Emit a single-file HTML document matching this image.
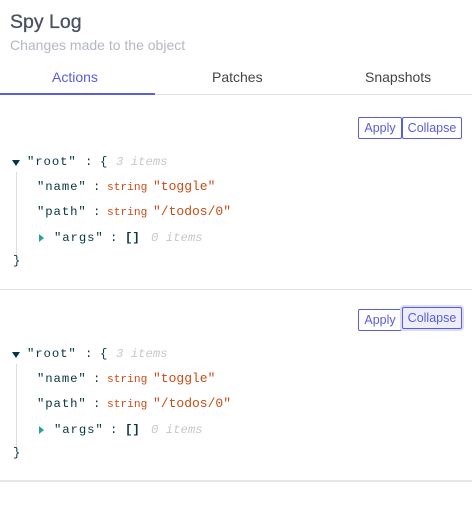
<!DOCTYPE html><html><head><style>
body{margin:0;width:472px;height:529px;background:#fff;font-family:"Liberation Sans",sans-serif;position:relative;overflow:hidden}
.a{position:absolute;white-space:pre}
.m{font-family:"Liberation Mono",monospace;font-size:12.3px;color:#073642}
.k{letter-spacing:0.9px}
.s{color:#cb4b16;font-size:13px}
.t{font-size:11.2px;color:#cb4b16}
.i{color:#c8c8c8;font-style:italic}
.btn{position:absolute;height:20px;border:1px solid #5a5de0;border-radius:2px;color:#5a5de0;font-size:12.5px;line-height:20px;text-align:center;box-sizing:content-box}
.vl{position:absolute;left:16px;width:1px;background:#ddd}
.tri{position:absolute;width:0;height:0}
</style></head><body>
<div class="a" style="left:10px;top:11px;font-size:19.5px;color:#4a5064;-webkit-text-stroke:0.3px #4a5064">Spy Log</div>
<div class="a" style="left:10px;top:37px;font-size:14px;color:#b4b8c5">Changes made to the object</div>
<div class="a" style="left:52px;top:69px;font-size:14px;color:#5a5de0">Actions</div>
<div class="a" style="left:212px;top:69px;font-size:14px;color:#444">Patches</div>
<div class="a" style="left:365px;top:69px;font-size:14px;color:#444">Snapshots</div>
<div style="position:absolute;left:0;top:94px;width:472px;height:1px;background:#e2e2e2"></div>
<div style="position:absolute;left:0;top:93px;width:155px;height:2px;background:#5a5de0"></div>

<div class="btn" style="left:358px;top:117px;width:42px">Apply</div>
<div class="btn" style="left:402px;top:117px;width:58px">Collapse</div>
<div class="tri" style="left:12px;top:160px;border-left:4px solid transparent;border-right:4px solid transparent;border-top:6px solid #073642"></div>
<div class="a m k" style="left:27px;top:155px">"root"</div><div class="a m" style="left:85px;top:155px">:</div><div class="a m" style="left:100px;top:155px">{</div><div class="a m i" style="left:116px;top:155px">3 items</div>
<div class="vl" style="top:172px;height:84px"></div>
<div class="a m k" style="left:37px;top:180px">"name"</div><div class="a m" style="left:93px;top:180px">:</div><div class="a t" style="left:107px;top:182px;font-family:'Liberation Mono',monospace">string</div><div class="a m s" style="left:153px;top:179px">"toggle"</div>
<div class="a m k" style="left:37px;top:205px">"path"</div><div class="a m" style="left:93px;top:205px">:</div><div class="a t" style="left:107px;top:207px;font-family:'Liberation Mono',monospace">string</div><div class="a m s" style="left:153px;top:204px">"/todos/0"</div>
<div class="tri" style="left:39px;top:234px;border-top:4px solid transparent;border-bottom:4px solid transparent;border-left:5px solid #2aa198"></div>
<div class="a m k" style="left:54px;top:231px">"args"</div><div class="a m" style="left:110px;top:231px">:</div><div class="a m" style="left:125px;top:231px;font-weight:bold">[]</div><div class="a m i" style="left:151px;top:231px">0 items</div>
<div class="a m" style="left:13px;top:254px">}</div>
<div style="position:absolute;left:0;top:289px;width:472px;height:1px;background:#e2e2e2"></div>

<div class="btn" style="left:358px;top:309px;width:42px">Apply</div>
<div class="btn" style="left:402px;top:307px;width:58px;background:#eeeefb;box-shadow:0 0 0 2px #dcdcf5">Collapse</div>
<div class="tri" style="left:12px;top:352px;border-left:4px solid transparent;border-right:4px solid transparent;border-top:6px solid #073642"></div>
<div class="a m k" style="left:27px;top:347px">"root"</div><div class="a m" style="left:85px;top:347px">:</div><div class="a m" style="left:100px;top:347px">{</div><div class="a m i" style="left:116px;top:347px">3 items</div>
<div class="vl" style="top:364px;height:84px"></div>
<div class="a m k" style="left:37px;top:372px">"name"</div><div class="a m" style="left:93px;top:372px">:</div><div class="a t" style="left:107px;top:374px;font-family:'Liberation Mono',monospace">string</div><div class="a m s" style="left:153px;top:371px">"toggle"</div>
<div class="a m k" style="left:37px;top:397px">"path"</div><div class="a m" style="left:93px;top:397px">:</div><div class="a t" style="left:107px;top:399px;font-family:'Liberation Mono',monospace">string</div><div class="a m s" style="left:153px;top:396px">"/todos/0"</div>
<div class="tri" style="left:39px;top:426px;border-top:4px solid transparent;border-bottom:4px solid transparent;border-left:5px solid #2aa198"></div>
<div class="a m k" style="left:54px;top:423px">"args"</div><div class="a m" style="left:110px;top:423px">:</div><div class="a m" style="left:125px;top:423px;font-weight:bold">[]</div><div class="a m i" style="left:151px;top:423px">0 items</div>
<div class="a m" style="left:13px;top:446px">}</div>
<div style="position:absolute;left:0;top:480px;width:472px;height:2px;background:#e6e6e6"></div>
</body></html>
